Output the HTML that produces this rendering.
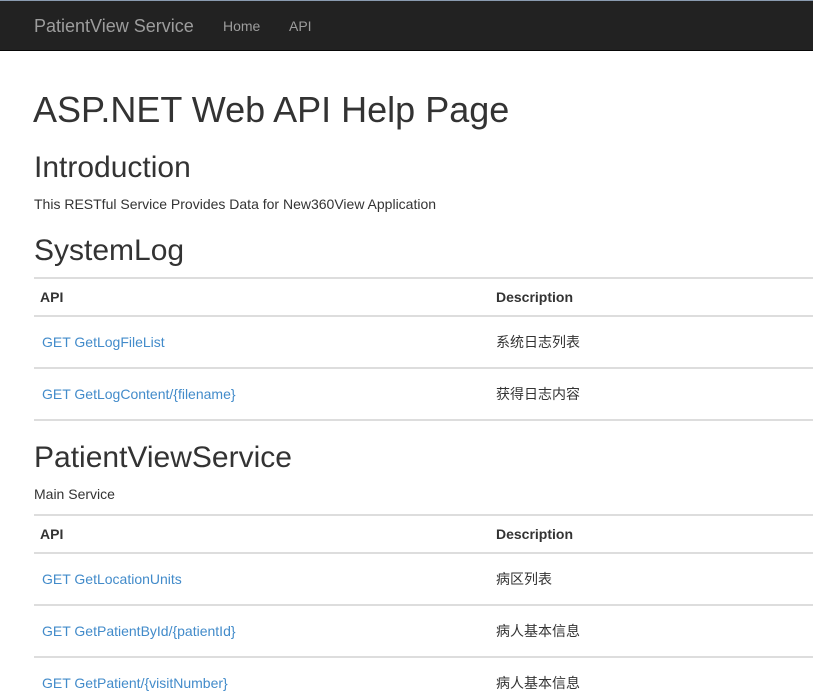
<!DOCTYPE html>
<html><head><meta charset="utf-8"><style>
body{margin:0;width:813px;height:696px;overflow:hidden;background:#fff;font-family:"Liberation Sans","Noto Sans CJK SC",sans-serif;color:#333;position:relative}
.nav{position:absolute;left:0;top:0;width:813px;height:51px;background:#222;border-top:1px solid #8a9bb0;box-sizing:border-box;border-bottom:1px solid #080808}
.t{position:absolute;white-space:nowrap;line-height:1}
.ln{position:absolute;left:34px;width:779px;height:2px;background:#ddd}
a{color:#428bca;text-decoration:none}
b{font-weight:bold}
</style></head><body>
<div class="nav"></div>
<div class="t" style="left:34px;top:17px;font-size:18px;color:#9d9d9d">PatientView Service</div>
<div class="t" style="left:223px;top:19px;font-size:14px;color:#9d9d9d">Home</div>
<div class="t" style="left:289px;top:19px;font-size:14px;color:#9d9d9d">API</div>
<div class="t" style="left:33px;top:92px;font-size:36px">ASP.NET Web API Help Page</div>
<div class="t" style="left:34px;top:153px;font-size:30px">Introduction</div>
<div class="t" style="left:34px;top:197px;font-size:14px">This RESTful Service Provides Data for New360View Application</div>
<div class="t" style="left:34px;top:236px;font-size:30px">SystemLog</div>
<div class="ln" style="top:277px"></div>
<div class="t" style="left:40px;top:290px;font-size:14px"><b>API</b></div>
<div class="t" style="left:496px;top:290px;font-size:14px"><b>Description</b></div>
<div class="ln" style="top:315px"></div>
<div class="t" style="left:42px;top:335px;font-size:14px"><a>GET GetLogFileList</a></div>
<div class="t" style="left:496px;top:335px;font-size:14px">系统日志列表</div>
<div class="ln" style="top:367px;height:1px;height:2px"></div>
<div class="t" style="left:42px;top:387px;font-size:14px"><a>GET GetLogContent/{filename}</a></div>
<div class="t" style="left:496px;top:387px;font-size:14px">获得日志内容</div>
<div class="ln" style="top:419px"></div>
<div class="t" style="left:34px;top:443px;font-size:30px">PatientViewService</div>
<div class="t" style="left:34px;top:487px;font-size:14px">Main Service</div>
<div class="ln" style="top:514px"></div>
<div class="t" style="left:40px;top:527px;font-size:14px"><b>API</b></div>
<div class="t" style="left:496px;top:527px;font-size:14px"><b>Description</b></div>
<div class="ln" style="top:552px"></div>
<div class="t" style="left:42px;top:572px;font-size:14px"><a>GET GetLocationUnits</a></div>
<div class="t" style="left:496px;top:572px;font-size:14px">病区列表</div>
<div class="ln" style="top:604px"></div>
<div class="t" style="left:42px;top:624px;font-size:14px"><a>GET GetPatientById/{patientId}</a></div>
<div class="t" style="left:496px;top:624px;font-size:14px">病人基本信息</div>
<div class="ln" style="top:656px"></div>
<div class="t" style="left:42px;top:676px;font-size:14px"><a>GET GetPatient/{visitNumber}</a></div>
<div class="t" style="left:496px;top:676px;font-size:14px">病人基本信息</div>
</body></html>
